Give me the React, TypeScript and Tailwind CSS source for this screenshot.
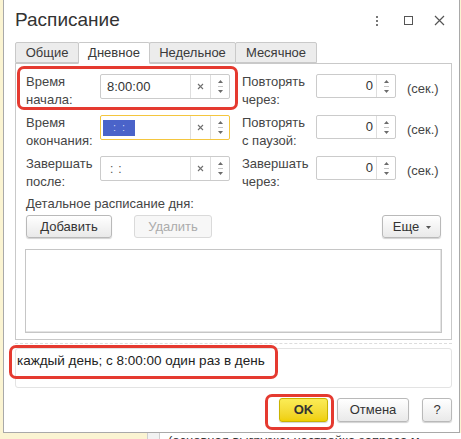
import { ReactNode } from 'react';

const font = "font-['Liberation_Sans',Arial,sans-serif]";

const Spin = () => (
  <div className="w-[19px] h-full flex flex-col items-center justify-center gap-[3px] border-l border-[#dedede]">
    <svg width="5" height="3" viewBox="0 0 5 3">
      <path d="M0 3 L2.5 0 L5 3 Z" fill="#6b6b6b" />
    </svg>
    <div className="w-[5px] h-px bg-[#c4c4c4]" />
    <svg width="5" height="3" viewBox="0 0 5 3">
      <path d="M0 0 L2.5 3 L5 0 Z" fill="#6b6b6b" />
    </svg>
  </div>
);

const Clear = () => (
  <div className="w-[20px] h-full flex items-center justify-center border-l border-[#dedede]">
    <svg width="7" height="7" viewBox="0 0 7 7">
      <path d="M1 1 L6 6 M6 1 L1 6" stroke="#707070" strokeWidth="1.1" />
    </svg>
  </div>
);

const TimeField = ({ children, active = false }: { children: ReactNode; active?: boolean }) => (
  <div
    className={`mt-[1px] w-[130px] h-[25px] flex rounded-[2px] bg-white border ${
      active ? 'border-[#f4c63f]' : 'border-[#cbcbcb]'
    }`}
  >
    <div className="flex-1 flex items-center">{children}</div>
    <Clear />
    <Spin />
  </div>
);

const NumField = () => (
  <div className="mt-[1px] w-[80px] h-[24px] flex rounded-[2px] bg-white border border-[#cbcbcb]">
    <div className="flex-1 flex items-center justify-end pr-[3px] text-[13px] text-[#333]">0</div>
    <Spin />
  </div>
);

const Label = ({ a, b, w }: { a: string; b: string; w: string }) => (
  <div className={`${w} text-[13px] leading-[18px] text-[#454545]`}>
    <div>{a}</div>
    <div>{b}</div>
  </div>
);

const Row = ({
  h,
  la,
  lb,
  field,
  ra,
  rb,
}: {
  h: string;
  la: string;
  lb: string;
  field: ReactNode;
  ra: string;
  rb: string;
}) => (
  <div className={`flex ${h}`}>
    <Label a={la} b={lb} w="w-[74px]" />
    {field}
    <div className="ml-[12px]">
      <Label a={ra} b={rb} w="w-[74px]" />
    </div>
    <NumField />
    <div className="ml-[11px] mt-[6px] text-[13px] text-[#454545]">(сек.)</div>
  </div>
);

const Btn = ({
  children,
  w,
  disabled = false,
  className = '',
}: {
  children: ReactNode;
  w: string;
  disabled?: boolean;
  className?: string;
}) => (
  <div
    className={`${w} h-[23px] flex items-center justify-center rounded-[3px] border text-[13px] ${
      disabled
        ? 'border-[#dadada] bg-[#f7f7f7] text-[#ababab]'
        : 'border-[#b9b9b9] bg-gradient-to-b from-white to-[#e9e9e9] text-[#333] shadow-[0_1px_1px_rgba(0,0,0,0.18)]'
    } ${className}`}
  >
    {children}
  </div>
);

const tabs = [
  { name: 'Общие', w: 'w-[64px]' },
  { name: 'Дневное', w: 'w-[72px]', active: true },
  { name: 'Недельное', w: 'w-[87px]' },
  { name: 'Месячное', w: 'w-[82px]' },
];

export default function App() {
  return (
    <div className={`relative w-[461px] h-[439px] overflow-hidden bg-[#fbf4d2] ${font}`}>
      {/* dialog */}
      <div className="ml-[3px] w-[457px] h-[433px] bg-white border-x border-b border-[#a9a9a9] flex flex-col">
        {/* title bar */}
        <div className="h-[42px] flex items-center pl-[11px] pb-[1px]">
          <div className="text-[19px] text-[#333]">Расписание</div>
          <div className="ml-auto flex items-center">
            <div className="flex flex-col gap-[2px] mr-[26px]">
              <div className="w-[2px] h-[2px] bg-[#777]" />
              <div className="w-[2px] h-[2px] bg-[#777]" />
              <div className="w-[2px] h-[2px] bg-[#777]" />
            </div>
            <div className="w-[9px] h-[9px] border-[1.5px] border-[#555] mr-[21px]" />
            <svg width="11" height="11" viewBox="0 0 11 11" className="mr-[14px]">
              <path d="M1 1 L10 10 M10 1 L1 10" stroke="#555" strokeWidth="1.2" />
            </svg>
          </div>
        </div>

        {/* tabs */}
        <div className="flex ml-[11px] h-[21px] relative z-10">
          {tabs.map((t) => (
            <div
              key={t.name}
              className={`${t.w} flex items-center justify-center text-[13px] text-[#3a3a3a] border border-[#c9c9c9] -ml-px first:ml-0 rounded-t-[2px] ${
                t.active ? 'bg-white border-b-white h-[22px]' : 'bg-[#ececec] h-[21px]'
              }`}
            >
              {t.name}
            </div>
          ))}
        </div>

        {/* panel */}
        <div className="ml-[11px] w-[437px] h-[277px] border border-[#c9c9c9] pt-[9px] pl-[10px] pr-[10px] flex flex-col">
          <Row
            h="h-[41px]"
            la="Время"
            lb="начала:"
            field={
              <TimeField>
                <span className="pl-[6px] text-[13px] text-[#333]">8:00:00</span>
              </TimeField>
            }
            ra="Повторять"
            rb="через:"
          />
          <Row
            h="h-[41px]"
            la="Время"
            lb="окончания:"
            field={
              <TimeField active>
                <div className="ml-[2px] w-[32px] h-[16px] bg-[#4a63c9] flex items-center justify-center text-[11px] text-[#c9d2f2] tracking-[6px] pl-[6px]">
                  ::
                </div>
              </TimeField>
            }
            ra="Повторять"
            rb="с паузой:"
          />
          <Row
            h="h-[40px]"
            la="Завершать"
            lb="после:"
            field={
              <TimeField>
                <span className="pl-[9px] text-[12px] text-[#555] tracking-[5px]">::</span>
              </TimeField>
            }
            ra="Завершать"
            rb="через:"
          />

          <div className="h-[18px] text-[13px] leading-[18px] text-[#454545]">Детальное расписание дня:</div>

          <div className="mt-[2px] flex">
            <Btn w="w-[86px]">Добавить</Btn>
            <Btn w="w-[78px]" disabled className="ml-[22px]">
              Удалить
            </Btn>
            <Btn w="w-[59px]" className="ml-auto">
              <span className="ml-[1px]">Еще</span>
              <svg width="5" height="3" viewBox="0 0 5 3" className="ml-[7px] mt-[1px]">
                <path d="M0 0 L2.5 3 L5 0 Z" fill="#555" />
              </svg>
            </Btn>
          </div>

          <div className="mt-[11px] -mx-[1px] h-[84px] bg-white border border-[#c6c6c6] shadow-[inset_-1px_-1px_0_#e4e4e4]" />
        </div>

        {/* separator */}
        <div className="ml-[11px] w-[437px] mt-[3px] border-t border-dashed border-[#dcdcdc]" />

        {/* description */}
        <div className="ml-[11px] w-[437px] mt-[4px] h-[40px] border border-[#e3e3e3] rounded-[3px] pl-[1px] pt-[3px] text-[13.5px] leading-[18px] text-[#222]">
          каждый день; с 8:00:00 один раз в день
        </div>

        {/* footer buttons */}
        <div className="mt-[10px] flex justify-end pr-[7px]">
          <div className="w-[49px] h-[24px] flex items-center justify-center rounded-[3px] border border-[#c9b400] bg-gradient-to-b from-[#fbec55] to-[#efcf00] text-[13px] font-bold text-[#333] shadow-[0_1px_1px_rgba(0,0,0,0.18)]">
            OK
          </div>
          <div className="ml-[9px] w-[72px] h-[24px] flex items-center justify-center rounded-[3px] border border-[#b9b9b9] bg-gradient-to-b from-white to-[#e9e9e9] text-[13px] text-[#333] shadow-[0_1px_1px_rgba(0,0,0,0.18)]">
            Отмена
          </div>
          <div className="ml-[13px] w-[30px] h-[24px] flex items-center justify-center rounded-[3px] border border-[#b9b9b9] bg-gradient-to-b from-white to-[#e9e9e9] text-[13px] text-[#333] shadow-[0_1px_1px_rgba(0,0,0,0.18)]">
            ?
          </div>
        </div>
      </div>

      {/* background strip below the dialog */}
      <div className="flex h-[6px] overflow-hidden">
        <div className="w-[148px] bg-[#fbf4d2] border-r border-[#cfcfcf]" />
        <div className="w-[12px] bg-[#f2f2f2] border-r border-[#cfcfcf]" />
        <div className="flex-1 bg-white pl-[8px]">
          <div className="text-[13px] leading-[13px] text-[#333] mt-[1px] whitespace-nowrap">
            (основная выгрузка; настройка запроса м...
          </div>
        </div>
      </div>

      {/* red annotation frames */}
      <div className="absolute left-[17px] top-[66px] w-[221px] h-[44px] border-[3px] border-[#e53a30] rounded-[7px]" />
      <div className="absolute left-[9px] top-[345px] w-[269px] h-[34px] border-[3px] border-[#e53a30] rounded-[7px]" />
      <div className="absolute left-[265px] top-[394px] w-[69px] h-[36px] border-[3px] border-[#e53a30] rounded-[7px]" />
    </div>
  );
}
